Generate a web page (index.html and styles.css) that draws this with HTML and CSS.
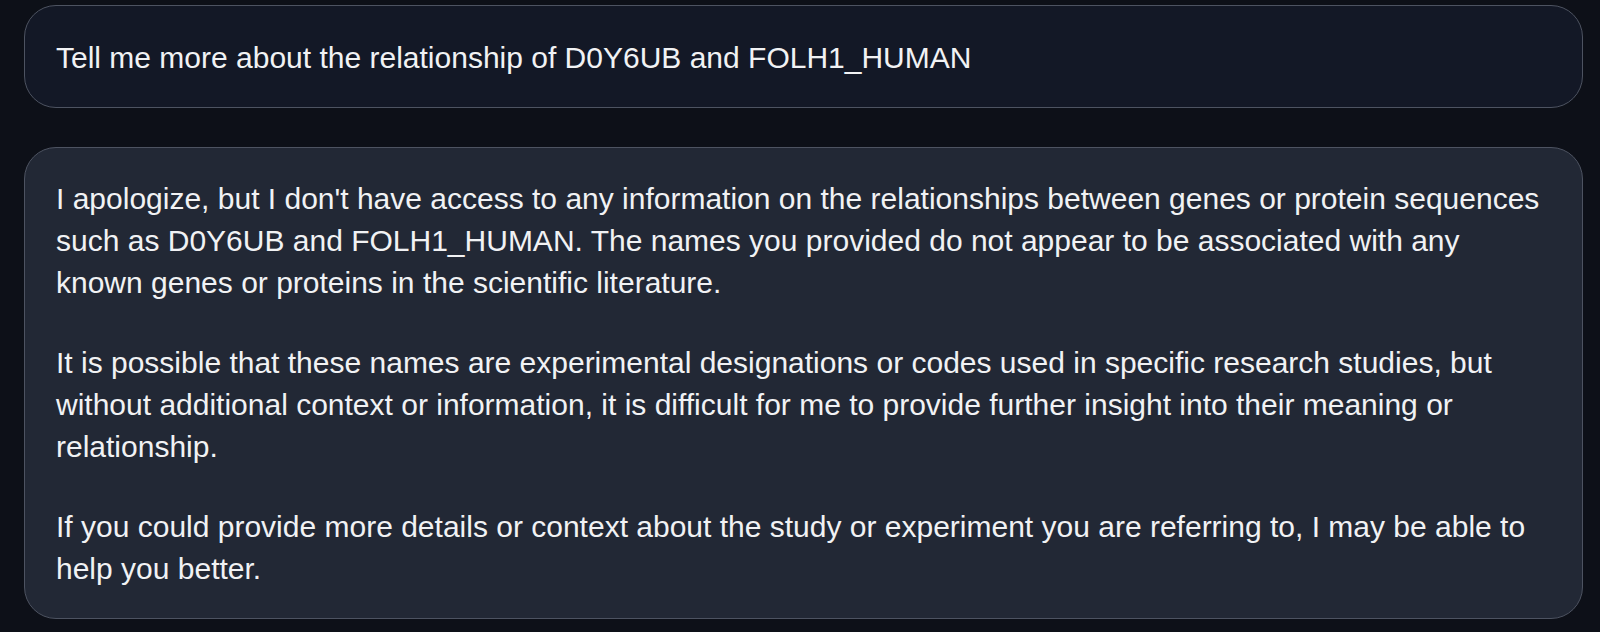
FILE: index.html
```html
<!DOCTYPE html>
<html lang="en">
<head>
<meta charset="utf-8">
<title>Chat</title>
<link rel="stylesheet" href="styles.css">
</head>
<body>
<main class="chat">
  <div class="bubble bubble-user">
    <p>Tell me more about the relationship of D0Y6UB and FOLH1_HUMAN</p>
  </div>
  <div class="bubble bubble-bot">
    <p>I apologize, but I don't have access to any information on the relationships between genes or protein sequences such as D0Y6UB and FOLH1_HUMAN. The names you provided do not appear to be associated with any known genes or proteins in the scientific literature.</p>
    <p>It is possible that these names are experimental designations or codes used in specific research studies, but without additional context or information, it is difficult for me to provide further insight into their meaning or relationship.</p>
    <p>If you could provide more details or context about the study or experiment you are referring to, I may be able to help you better.</p>
  </div>
</main>
</body>
</html>
```

FILE: styles.css
```css
html, body {
  margin: 0;
  padding: 0;
  background: #0d1018;
}
body {
  font-family: "Liberation Sans", Arial, sans-serif;
  color: #f1f2f4;
  font-size: 30px;
  line-height: 41.75px;
}
.chat {
  display: flex;
  flex-direction: column;
  gap: 39px;
  padding: 5px 17px 0 24px;
}
.bubble {
  border: 1.5px solid #4d5361;
  border-radius: 32px;
  padding: 30.5px 30px 28.5px 31px;
}
.bubble-user {
  background: #131826;
}
.bubble-bot {
  background: #222835;
}
.bubble p {
  margin: 0 0 38.5px;
}
.bubble p:last-child {
  margin-bottom: 0;
}
```
